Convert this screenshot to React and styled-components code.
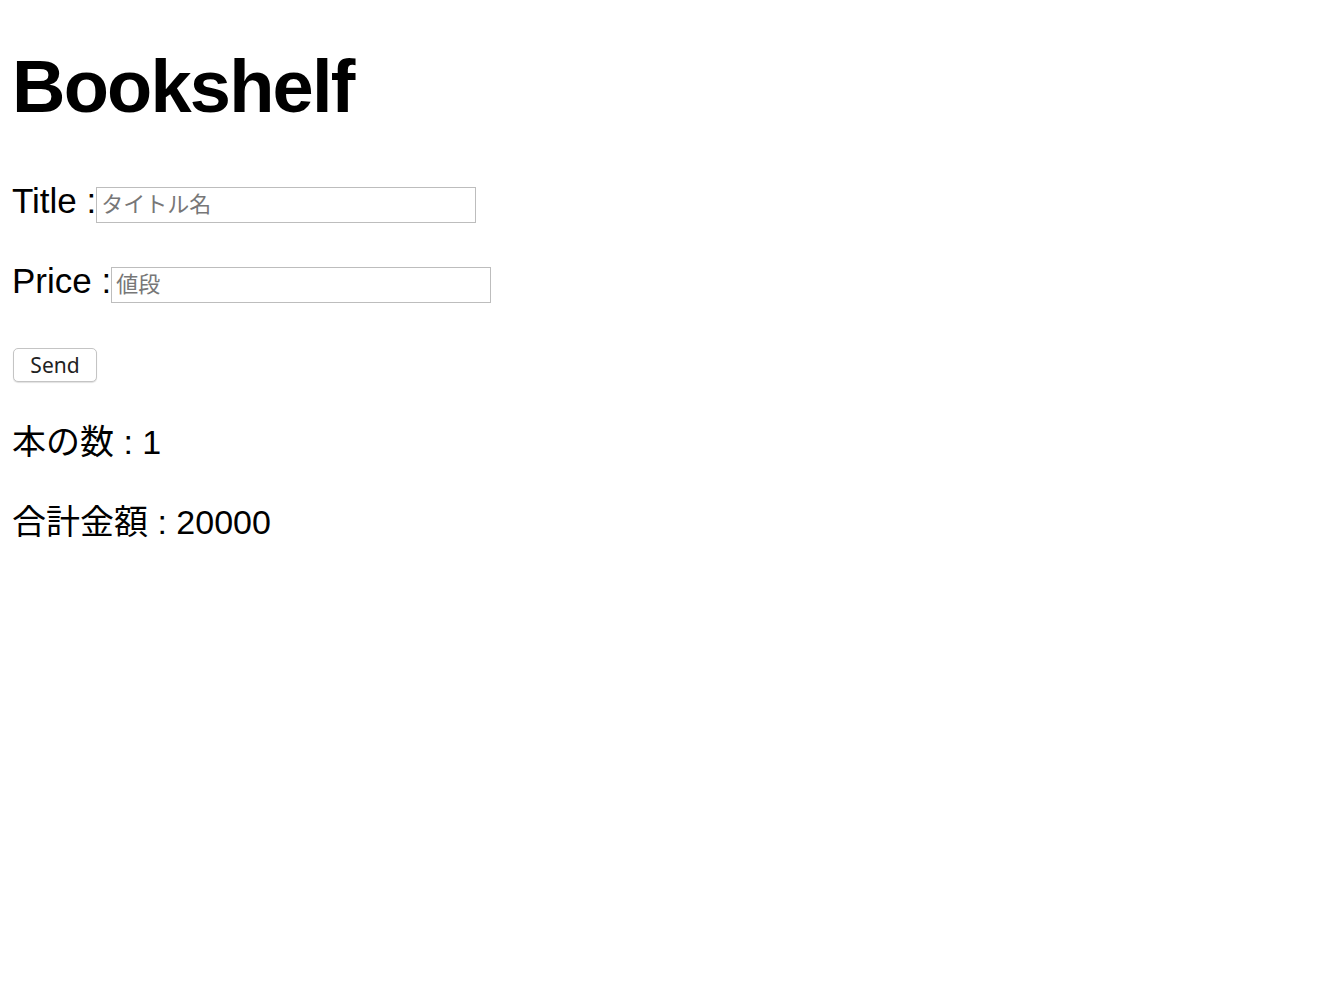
import React, { useState } from 'react'
import styled, { createGlobalStyle } from 'styled-components'

const GlobalStyle = createGlobalStyle`
  body {
    margin: 0;
    background: #ffffff;
    font-family: "Liberation Sans", Arial, "Noto Sans CJK JP", sans-serif;
    color: #000000;
  }
`

const Page = styled.div`
  padding: 40px 12px 0;
  display: flex;
  flex-direction: column;
`

const Heading = styled.h1`
  margin: 0 0 31px;
  font-size: 74px;
  line-height: 94px;
  font-weight: 700;
  letter-spacing: -1.8px;
`

const Field = styled.label`
  display: flex;
  align-items: center;
  height: 80px;
  font-size: 35px;
`

const LabelText = styled.span`
  margin-bottom: 9px;
`

const Input = styled.input`
  box-sizing: border-box;
  width: 380px;
  height: 36px;
  margin: 0;
  padding: 0 4px;
  border: 1px solid #bdbdbd;
  border-radius: 0;
  font-family: "Liberation Sans", "Noto Sans CJK JP", sans-serif;
  font-size: 22px;
  color: #000;
  &::placeholder {
    color: #777777;
  }
  &:focus {
    outline: none;
  }
`

const ButtonRow = styled.div`
  display: flex;
  align-items: center;
  height: 80px;
`

const Button = styled.button`
  box-sizing: border-box;
  width: 84px;
  height: 34px;
  margin-left: 1px;
  border: 1px solid #c4c4c4;
  border-radius: 5px;
  background: #ffffff;
  box-shadow: 0 1px 1px rgba(0, 0, 0, 0.12);
  font-family: "Noto Sans", "Liberation Sans", sans-serif;
  font-size: 21px;
  color: #222222;
  cursor: pointer;
`

const Stat = styled.p`
  margin: 0;
  height: 80px;
  display: flex;
  align-items: center;
  padding-bottom: 12px;
  box-sizing: border-box;
  font-size: 34px;
  &:first-of-type {
    margin-top: 0;
  }
`

const StatList = styled.div`
  display: flex;
  flex-direction: column;
`

const App = () => {
  const [books] = useState([{ title: '', price: 20000 }])
  const total = books.reduce((sum, b) => sum + b.price, 0)

  return (
    <Page>
      <GlobalStyle />
      <Heading>Bookshelf</Heading>
      <Field>
        <LabelText>Title :</LabelText>
        <Input type="text" placeholder="タイトル名" />
      </Field>
      <Field>
        <LabelText>Price :</LabelText>
        <Input type="text" placeholder="値段" />
      </Field>
      <ButtonRow>
        <Button>Send</Button>
      </ButtonRow>
      <StatList>
        <Stat>本の数 : {books.length}</Stat>
        <Stat>合計金額 : {total}</Stat>
      </StatList>
    </Page>
  )
}

export default App
